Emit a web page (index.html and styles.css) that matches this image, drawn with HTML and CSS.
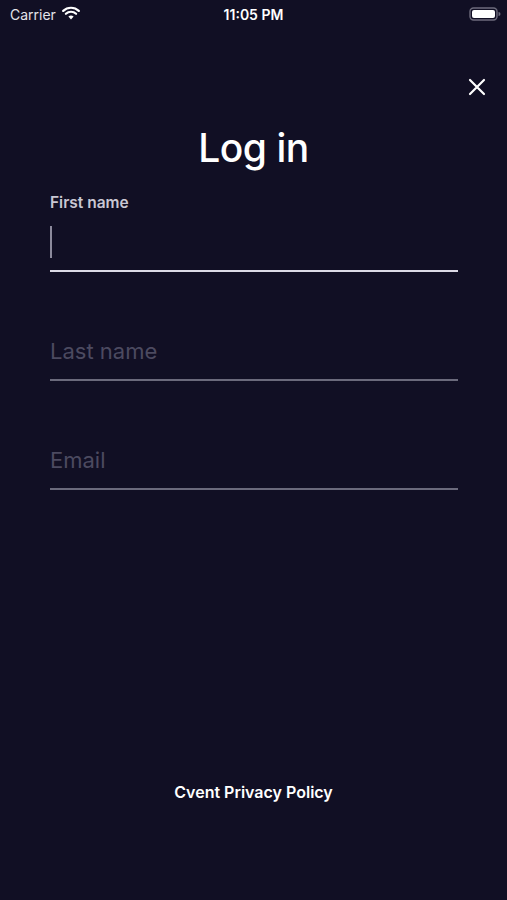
FILE: index.html
```html
<!DOCTYPE html>
<html lang="en">
<head>
    <meta charset="UTF-8">
    <meta name="viewport" content="width=device-width, initial-scale=1.0">
    <title>Log in</title>
    <link rel="stylesheet" href="styles.css">
</head>
<body>

<div class="screen">
    <!-- Status bar -->
    <div class="status-bar">
        <div class="status-left">
            <span>Carrier</span>
            <svg class="wifi" width="18" height="14" viewBox="0 0 18 14">
                <path d="M9 13.5 L6.4 10.6 A3.8 3.8 0 0 1 11.6 10.6 Z" fill="#fff"/>
                <path d="M3.9 7.8 A7.4 7.4 0 0 1 14.1 7.8" stroke="#fff" stroke-width="2.2" fill="none" stroke-linecap="round"/>
                <path d="M1.2 4.9 A11.2 11.2 0 0 1 16.8 4.9" stroke="#fff" stroke-width="2.2" fill="none" stroke-linecap="round"/>
            </svg>
        </div>
        <div class="status-time">11:05 PM</div>
        <div class="status-right">
            <svg width="32" height="14" viewBox="0 0 32 14">
                <rect x="1" y="1" width="27" height="12" rx="3.5" fill="none" stroke="#6d6b7c" stroke-width="1.4"/>
                <rect x="3" y="3" width="23" height="8" rx="2" fill="#fff"/>
                <path d="M29.5 5 A2 2 0 0 1 29.5 9 Z" fill="#6d6b7c"/>
            </svg>
        </div>
    </div>

    <div class="close-row">
        <button class="close-btn" aria-label="Close">
            <svg width="18" height="18" viewBox="0 0 18 18">
                <path d="M2 2 L16 16 M16 2 L2 16" stroke="#fff" stroke-width="2.2" stroke-linecap="round"/>
            </svg>
        </button>
    </div>

    <h1 class="title">Log in</h1>

    <form class="login-form">
        <div class="field active">
            <label for="firstName">First name</label>
            <div class="input-wrap">
                <input type="text" id="firstName">
                <span class="caret"></span>
            </div>
        </div>
        <div class="field">
            <label for="lastName"></label>
            <div class="input-wrap">
                <input type="text" id="lastName" placeholder="Last name">
            </div>
        </div>
        <div class="field">
            <label for="email"></label>
            <div class="input-wrap">
                <input type="email" id="email" placeholder="Email">
            </div>
        </div>
    </form>

    <footer class="footer">
        <a href="#">Cvent Privacy Policy</a>
    </footer>
</div>

</body>
</html>
```

FILE: styles.css
```css
body {
    margin: 0;
    padding: 0;
    background-color: #110f24;
    font-family: Inter, "Noto Sans", sans-serif;
    color: #fff;
}
.screen {
    min-height: 900px;
    display: flex;
    flex-direction: column;
}
.status-bar {
    height: 28px;
    display: flex;
    align-items: center;
    justify-content: space-between;
    padding: 0 6px 0 10px;
    font-size: 14px;
    position: relative;
}
.status-left {
    display: flex;
    align-items: center;
    gap: 6px;
    color: #e4e3ea;
}
.wifi {
    margin-top: -3px;
}
.status-time {
    position: absolute;
    left: 0;
    right: 0;
    text-align: center;
    font-weight: 600;
    pointer-events: none;
}
.status-right {
    display: flex;
    align-items: center;
    margin-top: -1px;
}
.close-row {
    display: flex;
    justify-content: flex-end;
    padding: 50px 21px 0 0;
}
.close-btn {
    background: none;
    border: none;
    padding: 0;
    width: 18px;
    height: 18px;
    cursor: pointer;
}
.close-btn svg {
    display: block;
}
.title {
    margin: 28px 0 0;
    text-align: center;
    font-size: 39px;
    line-height: 48px;
    font-weight: 500;
    letter-spacing: -0.5px;
}
.login-form {
    margin-top: 20px;
    padding: 0 49px 0 50px;
    display: flex;
    flex-direction: column;
    gap: 29px;
}
.field label {
    display: block;
    height: 22px;
    line-height: 22px;
    font-size: 15.5px;
    font-weight: 600;
    color: #c9c7d3;
}
.input-wrap {
    position: relative;
    border-bottom: 2px solid #6b6a7c;
}
.field.active .input-wrap {
    border-bottom-color: #dcdae6;
}
.input-wrap input {
    display: block;
    width: 100%;
    height: 56px;
    box-sizing: border-box;
    padding: 0;
    border: none;
    outline: none;
    background: transparent;
    color: #fff;
    font-family: Inter, "Noto Sans", sans-serif;
    font-size: 22px;
}
.input-wrap input::placeholder {
    color: #4c4a60;
}
.caret {
    position: absolute;
    left: 0;
    top: 12px;
    width: 2px;
    height: 32px;
    background-color: #8c8a9c;
}
.footer {
    margin-top: auto;
    padding-bottom: 98px;
    text-align: center;
    line-height: 20px;
}
.footer a {
    color: #fff;
    text-decoration: none;
    font-size: 16px;
    font-weight: 600;
}
```
